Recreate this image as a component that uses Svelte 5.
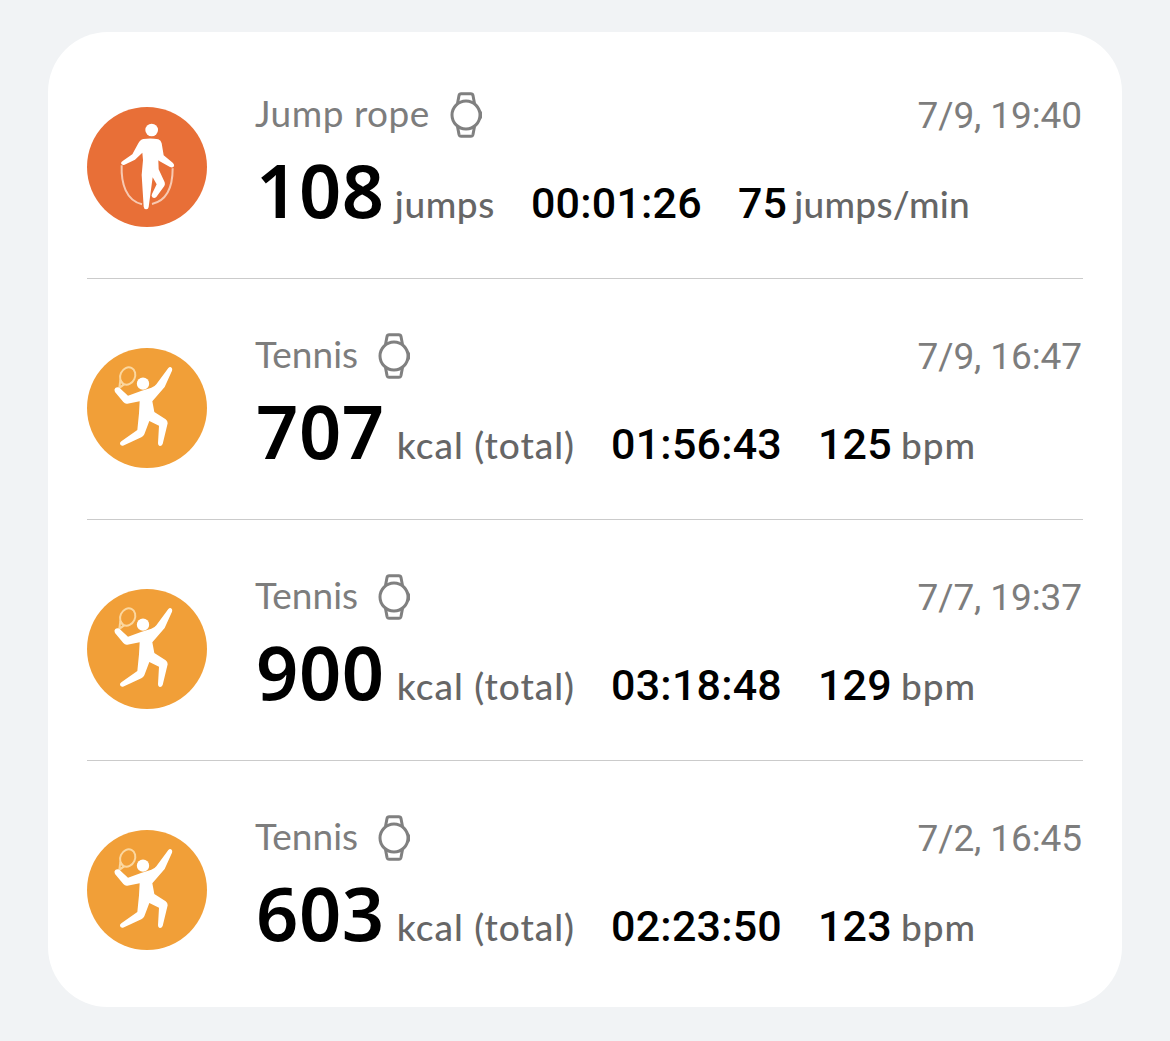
<script>
  const workouts = [
    {
      type: "rope",
      name: "Jump rope",
      date: "7/9, 19:40",
      value: "108",
      unit: "jumps",
      duration: "00:01:26",
      rate: "75",
      rateUnit: "jumps/min",
    },
    {
      type: "tennis",
      name: "Tennis",
      date: "7/9, 16:47",
      value: "707",
      unit: "kcal (total)",
      duration: "01:56:43",
      rate: "125",
      rateUnit: "bpm",
    },
    {
      type: "tennis",
      name: "Tennis",
      date: "7/7, 19:37",
      value: "900",
      unit: "kcal (total)",
      duration: "03:18:48",
      rate: "129",
      rateUnit: "bpm",
    },
    {
      type: "tennis",
      name: "Tennis",
      date: "7/2, 16:45",
      value: "603",
      unit: "kcal (total)",
      duration: "02:23:50",
      rate: "123",
      rateUnit: "bpm",
    },
  ];
</script>

<main>
  <ul class="card">
    {#each workouts as workout}
      <li class="workout {workout.type}">
        {#if workout.type === "rope"}
          <svg class="icon" viewBox="21 21 360 360">
            <circle cx="201" cy="201" r="180" fill="#e86f37" />
            <path
              d="M125 196C123 250 138 302 186 313M278 205C278 258 262 302 216 312"
              fill="none"
              stroke="#f8c9b1"
              stroke-width="6"
            />
            <circle cx="215" cy="90" r="19" fill="#fff" />
            <path
              d="M190 117Q213 113 235 118Q243 121 245 130L251 166L279 189Q285 195 281 200Q277 204 270 201L239 184L235 181L236 208L254 247Q256 253 253 258L229 291Q223 296 217 292Q213 288 216 282L230 253L218 232L206 321Q205 328 199 328Q192 328 191 320L185 225L189 180L187 158L165 179L132 195Q125 196 123 190Q123 186 129 182L157 163L175 130Q180 119 190 117Z"
              fill="#fff"
            />
          </svg>
        {:else}
          <svg class="icon" viewBox="21 24 360 360">
            <circle cx="201" cy="204" r="180" fill="#f19f38" />
            <g fill="none" stroke="#fbd79f" stroke-width="6">
              <ellipse cx="143" cy="108" rx="22" ry="27" transform="rotate(25 143 108)" />
              <path d="M121 120L118 143M121 120L131 134L115 146" />
            </g>
            <circle cx="189" cy="131" r="18.5" fill="#fff" />
            <path
              d="M265 84Q270 79 275 83Q278 86 276 92L254 141L217 184L223 216L257 238Q263 243 263 250L248 312Q245 319 239 318Q234 317 234 310L237 257L208 243L193 283Q190 289 184 292L129 317Q122 318 120 312Q119 307 124 304L172 270L177 220L179 184L142 191Q135 192 130 186L105 156Q101 149 106 144Q112 139 119 144L144 167L183 153L214 143Q223 141 229 133Z"
              fill="#fff"
            />
          </svg>
        {/if}
        <div class="body">
          <div class="head">
            <span class="name">{workout.name}</span>
            <svg class="watch" viewBox="0 0 34 48" fill="none" stroke="#808080">
              <circle cx="17" cy="24" r="14" stroke-width="3" />
              <path
                d="M8.5 12.5L10 4.5Q10.4 2.8 12.2 2.8H21.8Q23.6 2.8 24 4.5L25.5 12.5M8.5 35.5L10 43.5Q10.4 45.2 12.2 45.2H21.8Q23.6 45.2 24 43.5L25.5 35.5"
                stroke-width="3"
              />
              <path d="M31 19.5L32.2 21.5V26.5L31 28.5" stroke-width="1.6" />
            </svg>
            <time>{workout.date}</time>
          </div>
          <div class="stats">
            <span class="value">{workout.value}</span>
            <span class="unit">{workout.unit}</span>
            <span class="number">{workout.duration}</span>
            <span class="number">{workout.rate}</span>
            <span class="unit rate-unit">{workout.rateUnit}</span>
          </div>
        </div>
      </li>
    {/each}
  </ul>
</main>

<style>
  :global(body) {
    background: #f1f3f5;
  }

  main {
    box-sizing: border-box;
    height: 1041px;
    padding: 32px 48px 34px;
    font-family: "Noto Sans", "Open Sans", sans-serif;
  }

  .card {
    box-sizing: border-box;
    height: 975px;
    margin: 0;
    padding: 6px 39px;
    list-style: none;
    background: #fff;
    border-radius: 60px;
  }

  .workout {
    display: flex;
    gap: 48px;
    height: 240px;
    border-bottom: 1px solid #cbcbcb;
  }

  .workout:last-child {
    border-bottom: none;
  }

  .icon {
    flex: none;
    width: 120px;
    height: 120px;
    margin-top: 69px;
  }

  .body {
    flex: 1;
    padding-top: 52px;
  }

  .head {
    display: flex;
    align-items: center;
    height: 50px;
    color: #7d7d7d;
  }

  .name {
    padding-bottom: 4px;
    font-family: Lato, sans-serif;
    font-size: 37px;
    line-height: 46px;
  }

  .rope .name {
    letter-spacing: 0.5px;
  }

  .watch {
    width: 34px;
    height: 48px;
    margin-left: 19px;
  }

  time {
    margin-left: auto;
    padding: 2px 1px 0 0;
    font-family: Roboto, sans-serif;
    font-size: 37px;
    line-height: 48px;
    letter-spacing: -0.1px;
  }

  .stats {
    display: flex;
    align-items: baseline;
    height: 90px;
    padding-top: 5px;
    white-space: nowrap;
  }

  .value {
    padding-left: 1px;
    font-size: 74px;
    font-weight: 650;
    line-height: 90px;
    letter-spacing: 0.6px;
  }

  .unit {
    margin-left: 12px;
    font-family: Lato, sans-serif;
    font-size: 37px;
    font-weight: 500;
    letter-spacing: 1px;
    color: #666;
  }

  .rate-unit {
    margin-left: 9px;
  }

  .rope .unit {
    margin-left: 10px;
    letter-spacing: 0.6px;
  }

  .rope .rate-unit {
    margin-left: 7px;
    letter-spacing: 0.3px;
  }

  .number {
    margin-left: 36px;
    font-family: Roboto, sans-serif;
    font-size: 43px;
    font-weight: 500;
    letter-spacing: 0.2px;
  }
</style>
